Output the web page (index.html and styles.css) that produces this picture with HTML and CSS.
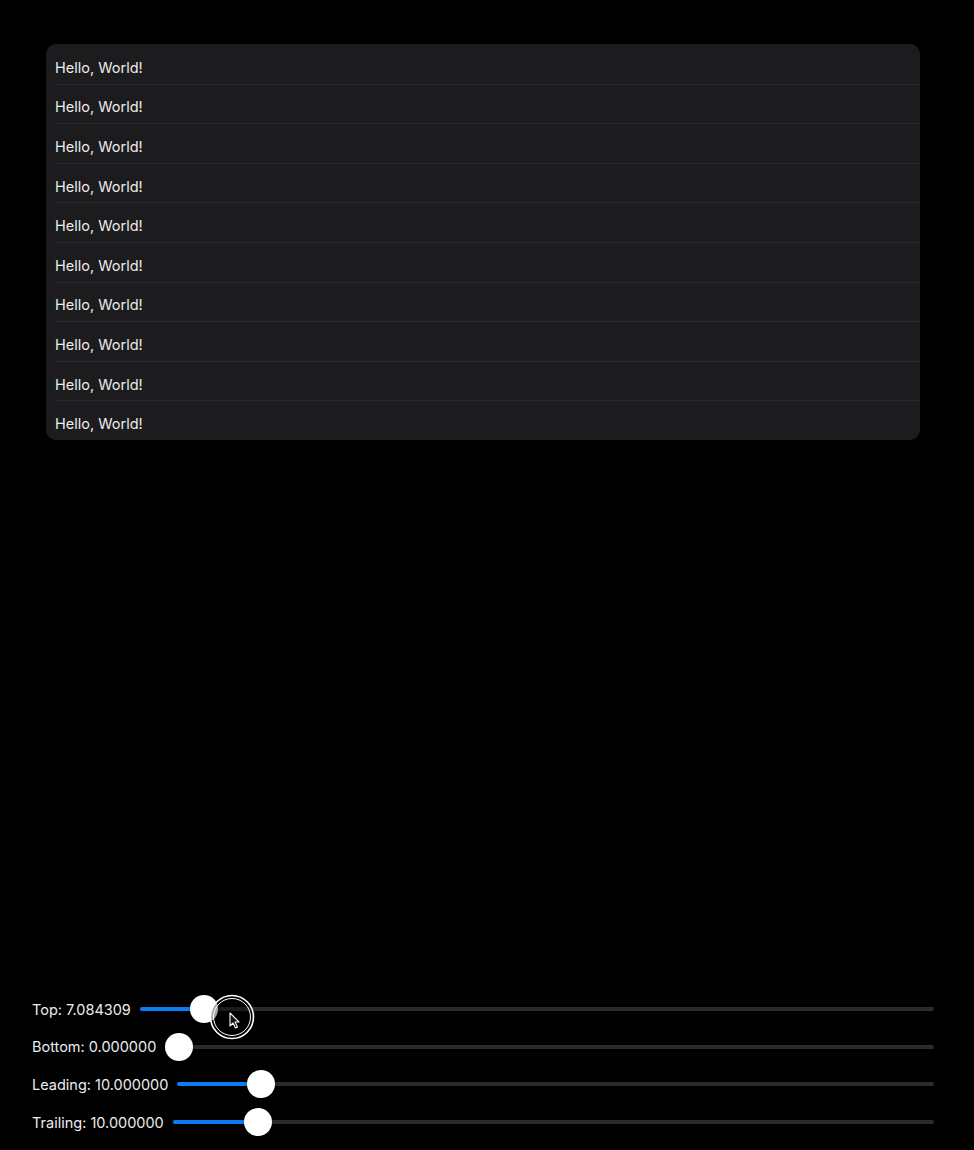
FILE: index.html
```html
<!DOCTYPE html>
<html>
<head>
<meta charset="utf-8">
<link rel="stylesheet" href="styles.css">
</head>
<body>
<div class="page">
  <div class="list">
    <div class="row">Hello, World!</div>
    <div class="row">Hello, World!</div>
    <div class="row">Hello, World!</div>
    <div class="row">Hello, World!</div>
    <div class="row">Hello, World!</div>
    <div class="row">Hello, World!</div>
    <div class="row">Hello, World!</div>
    <div class="row">Hello, World!</div>
    <div class="row">Hello, World!</div>
    <div class="row">Hello, World!</div>
  </div>
  <div class="controls">
    <div class="slider-row">
      <span class="label">Top: 7.084309</span>
      <div class="track">
        <div class="fill" style="width:60px"></div>
        <div class="thumb" style="left:64px"></div>
        <svg class="cursor" width="48" height="48" viewBox="0 0 48 48">
          <circle cx="24" cy="24" r="21.5" fill="rgba(0,0,0,0.35)" stroke="#fff" stroke-width="1.6"/>
          <circle cx="24" cy="24" r="18.5" fill="none" stroke="#fff" stroke-width="1"/>
          <path d="M22 20 L22 33 L25 30 L27.5 35 L29.5 34 L27 29 L31 29 Z" fill="#111" stroke="#fff" stroke-width="1.1" stroke-linejoin="round"/>
        </svg>
      </div>
    </div>
    <div class="slider-row">
      <span class="label">Bottom: 0.000000</span>
      <div class="track">
        <div class="fill" style="width:0px"></div>
        <div class="thumb" style="left:14px"></div>
      </div>
    </div>
    <div class="slider-row">
      <span class="label">Leading: 10.000000</span>
      <div class="track">
        <div class="fill" style="width:80px"></div>
        <div class="thumb" style="left:84px"></div>
      </div>
    </div>
    <div class="slider-row">
      <span class="label">Trailing: 10.000000</span>
      <div class="track">
        <div class="fill" style="width:80px"></div>
        <div class="thumb" style="left:85px"></div>
      </div>
    </div>
  </div>
</div>
</body>
</html>
```

FILE: styles.css
```css
html, body {
  margin: 0;
  padding: 0;
  background: #000;
}
body {
  font-family: Inter, "Noto Sans", sans-serif;
  color: #ececec;
}
.page {
  height: 1150px;
  display: flex;
  flex-direction: column;
  justify-content: space-between;
}
.list {
  margin: 44px 54px 0 46px;
  background: #1c1c1e;
  border-radius: 10px;
  overflow: hidden;
}
.row {
  height: 39.6px;
  box-sizing: border-box;
  padding: 7px 0 0 9px;
  display: flex;
  align-items: center;
  font-size: 14.5px;
  position: relative;
}
.row + .row::before {
  content: "";
  position: absolute;
  left: 9px;
  right: 0;
  top: 0;
  height: 1px;
  background: #2a2a2c;
}
.controls {
  padding: 0 40px 9px 32px;
  display: flex;
  flex-direction: column;
}
.slider-row {
  height: 37.7px;
  display: flex;
  align-items: center;
  gap: 9px;
}
.label {
  font-size: 14.5px;
  white-space: nowrap;
}
.track {
  flex: 1;
  height: 4px;
  border-radius: 2px;
  background: #2b2b2d;
  position: relative;
}
.fill {
  height: 4px;
  border-radius: 2px;
  background: #0a7cf5;
}
.thumb {
  position: absolute;
  top: 2px;
  width: 28px;
  height: 28px;
  margin: -14px 0 0 -14px;
  border-radius: 50%;
  background: #fff;
  box-shadow: 0 1px 3px rgba(0,0,0,0.3);
}
.cursor {
  position: absolute;
  left: 68px;
  top: -14px;
}
```
